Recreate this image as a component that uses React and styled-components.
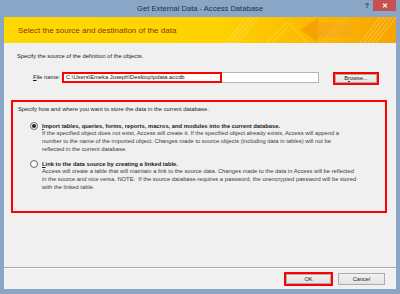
import styled, { createGlobalStyle } from "styled-components";

const GlobalStyle = createGlobalStyle`
  html, body {
    margin: 0;
    padding: 0;
    background: #8aa6c7;
  }
  body {
    font-family: "Liberation Sans", Arial, sans-serif;
  }
`;

const Window = styled.div`
  width: 400px;
  height: 294px;
  display: flex;
  flex-direction: column;
  background: #8aa6c7;
  overflow: hidden;
`;

const TitleBar = styled.div`
  height: 17px;
  display: grid;
  grid-template-columns: 1fr auto 1fr;
  align-items: start;
`;

const Title = styled.div`
  grid-column: 2;
  font-size: 7.6px;
  line-height: 17px;
  color: #1d2f46;
`;

const Controls = styled.div`
  justify-self: end;
  display: flex;
  align-items: flex-start;
  gap: 4px;
  margin-right: 4px;
`;

const Help = styled.span`
  font-size: 7px;
  font-weight: bold;
  color: #2c3b4f;
  line-height: 12px;
`;

const CloseBtn = styled.div`
  width: 23px;
  height: 11px;
  background: #c75050;
  color: #fff;
  font-size: 7px;
  font-weight: bold;
  display: flex;
  align-items: center;
  justify-content: center;
`;

const Frame = styled.div`
  flex: 1;
  margin: 0 4px 5px 4px;
  display: flex;
  flex-direction: column;
  background: #f0f0f0;
`;

const Header = styled.div`
  height: 26px;
  display: flex;
  align-items: center;
  background: linear-gradient(90deg, #ffd800 0%, #ffd200 55%, #fbb700 80%, #f7a500 100%);
  overflow: hidden;
`;

const HeaderText = styled.div`
  padding-left: 14px;
  font-size: 8px;
  color: #8a3b0c;
  white-space: nowrap;
`;

const HeaderArt = styled.svg`
  margin-left: auto;
  flex: none;
  display: block;
`;

const Body = styled.div`
  flex: 1;
  display: flex;
  flex-direction: column;
`;

const Small = styled.div`
  font-size: 5.8px;
  line-height: 8px;
  color: #1a1a1a;
  white-space: nowrap;
`;

const Intro = styled(Small)`
  margin: 9px 0 0 13px;
`;

const FileRow = styled.div`
  display: flex;
  align-items: flex-start;
  margin: 12px 0 0 29px;
`;

const Label = styled.span`
  font-size: 5.8px;
  line-height: 11px;
  width: 29px;
  color: #1a1a1a;
  white-space: nowrap;
`;

const InputField = styled.div`
  width: 257px;
  height: 11px;
  box-sizing: border-box;
  border: 1px solid #b5b5b5;
  background: #fff;
  display: flex;
`;

const Marked = styled.div`
  width: 160px;
  height: 11px;
  margin: -1px;
  box-sizing: border-box;
  border: 2px solid #ff0000;
  font-size: 5.8px;
  line-height: 7px;
  padding-left: 2px;
  color: #111;
  white-space: nowrap;
  overflow: hidden;
`;

const RedBox = styled.div`
  border: 2px solid #ff0000;
  display: flex;
  margin-left: ${(p) => p.$ml || 0}px;
`;

const Button = styled.div`
  width: ${(p) => p.$w}px;
  height: ${(p) => p.$h}px;
  box-sizing: border-box;
  border: 1px solid #acacac;
  background: linear-gradient(#f2f2f2, #e3e3e3);
  font-size: 5.6px;
  line-height: ${(p) => p.$h - 2}px;
  text-align: center;
  color: #1a1a1a;
`;

const Options = styled.div`
  margin: 15px 0 0 7px;
  width: 376px;
  height: 113px;
  box-sizing: border-box;
  border: 2px solid #ff0000;
  padding: 3px 0 0 5px;
  display: flex;
  flex-direction: column;
`;

const Option = styled.div`
  display: grid;
  grid-template-columns: 8px 1fr;
  column-gap: 4px;
  margin: ${(p) => p.$mt}px 0 0 12px;
`;

const Radio = styled.span`
  width: 8px;
  height: 8px;
  box-sizing: border-box;
  border-radius: 50%;
  border: 1px solid #6f6f6f;
  background: radial-gradient(circle, #ffffff 30%, #e4e4e4 100%);
  display: flex;
  align-items: center;
  justify-content: center;
  align-self: center;
  &::after {
    content: "";
    width: 4px;
    height: 4px;
    border-radius: 50%;
    background: ${(p) => (p.$checked ? "#222" : "transparent")};
  }
`;

const OptionTitle = styled(Small)`
  font-weight: bold;
`;

const Desc = styled(Small)`
  grid-column: 2;
  color: #3a3a3a;
  line-height: 7.8px;
`;

const Footer = styled.div`
  height: 21px;
  border-top: 1px solid #a9a9a9;
  box-shadow: inset 0 1px 0 #ffffff;
  display: flex;
  align-items: center;
  justify-content: flex-end;
  gap: 5px;
  padding-right: 11px;
`;

function Banner() {
  return (
    <HeaderArt width="170" height="26" viewBox="0 0 170 26">
      <defs>
        <linearGradient id="fade" x1="0" x2="1" y1="0" y2="0">
          <stop offset="0" stopColor="#ffd200" stopOpacity="0" />
          <stop offset="1" stopColor="#f7a400" stopOpacity="0.6" />
        </linearGradient>
      </defs>
      <rect x="0" y="0" width="170" height="26" fill="url(#fade)" />
      <g stroke="#fff3b0" strokeOpacity="0.55" strokeWidth="0.7">
        <line x1="0" y1="26" x2="20" y2="0" />
        <line x1="4" y1="26" x2="24" y2="0" />
        <line x1="8" y1="26" x2="28" y2="0" />
        <line x1="12" y1="26" x2="32" y2="0" />
        <line x1="40" y1="26" x2="61" y2="5" />
        <line x1="61" y1="5" x2="82" y2="26" />
        <line x1="46" y1="26" x2="62" y2="10" />
        <line x1="134" y1="26" x2="154" y2="0" />
        <line x1="138" y1="26" x2="158" y2="0" />
        <line x1="142" y1="26" x2="162" y2="0" />
        <line x1="146" y1="26" x2="166" y2="0" />
        <line x1="150" y1="26" x2="170" y2="0" />
      </g>
      <polygon points="74,13 92,1 92,6 126,6 126,20 92,20 92,25" fill="#f49b00" fillOpacity="0.75" />
      <polygon points="92,6 126,6 126,20 92,20" fill="#f7b21a" fillOpacity="0.6" />
      <g stroke="#fff3b0" strokeOpacity="0.4" strokeWidth="0.6">
        <line x1="96" y1="26" x2="116" y2="0" />
        <line x1="100" y1="26" x2="120" y2="0" />
        <line x1="104" y1="26" x2="124" y2="0" />
      </g>
    </HeaderArt>
  );
}

export default function App() {
  return (
    <>
      <GlobalStyle />
      <Window>
        <TitleBar>
          <Title>Get External Data - Access Database</Title>
          <Controls>
            <Help>?</Help>
            <CloseBtn>✕</CloseBtn>
          </Controls>
        </TitleBar>
        <Frame>
          <Header>
            <HeaderText>Select the source and destination of the data</HeaderText>
            <Banner />
          </Header>
          <Body>
            <Intro>Specify the source of the definition of the objects.</Intro>
            <FileRow>
              <Label>
                <u>F</u>ile name:
              </Label>
              <InputField>
                <Marked>C:\Users\Emeka Joseph\Desktop\pdata.accdb</Marked>
              </InputField>
              <RedBox $ml={14}>
                <Button $w={42} $h={9}>
                  B<u>r</u>owse...
                </Button>
              </RedBox>
            </FileRow>
            <Options>
              <Small>Specify how and where you want to store the data in the current database.</Small>
              <Option $mt={9}>
                <Radio $checked />
                <OptionTitle>
                  <u>I</u>mport tables, queries, forms, reports, macros, and modules into the current database.
                </OptionTitle>
                <Desc>
                  If the specified object does not exist, Access will create it. If the specified object already exists, Access will append a
                  <br />
                  number to the name of the imported object. Changes made to source objects (including data in tables) will not be
                  <br />
                  reflected in the current database.
                </Desc>
              </Option>
              <Option $mt={7}>
                <Radio />
                <OptionTitle>
                  <u>L</u>ink to the data source by creating a linked table.
                </OptionTitle>
                <Desc>
                  Access will create a table that will maintain a link to the source data. Changes made to the data in Access will be reflected
                  <br />
                  in the source and vice versa. NOTE:&nbsp; If the source database requires a password, the unencrypted password will be stored
                  <br />
                  with the linked table.
                </Desc>
              </Option>
            </Options>
          </Body>
          <Footer>
            <RedBox>
              <Button $w={45} $h={10}>OK</Button>
            </RedBox>
            <Button $w={47} $h={12}>Cancel</Button>
          </Footer>
        </Frame>
      </Window>
    </>
  );
}
